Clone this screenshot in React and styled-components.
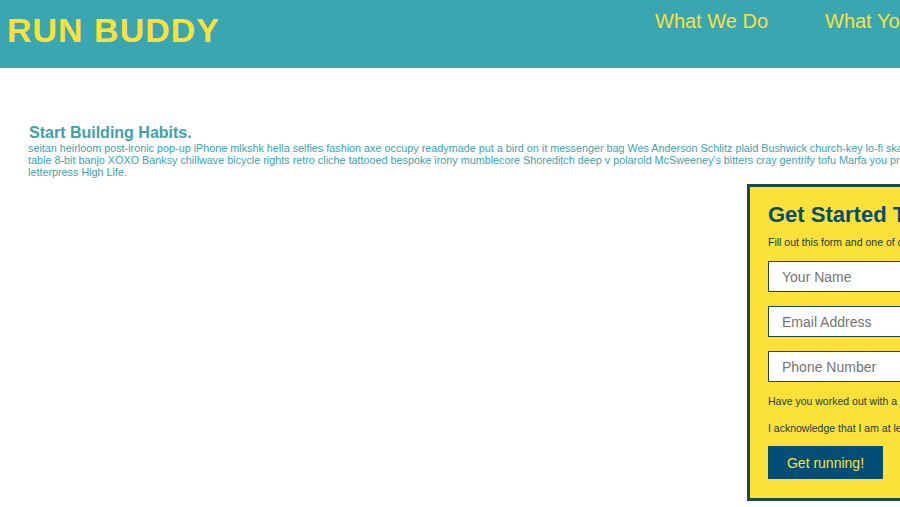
import React from 'react';
import styled, { createGlobalStyle } from 'styled-components';

const GlobalStyle = createGlobalStyle`
  html, body {
    margin: 0;
    padding: 0;
    overflow: hidden;
    background: #fff;
  }
  body {
    font-family: "Liberation Sans", Arial, sans-serif;
  }
`;

const navItems = ['What We Do', "What You'll Do", 'Your Trainers', 'Reach Out'];

const intro =
  "seitan heirloom post-ironic pop-up iPhone mlkshk hella selfies fashion axe occupy readymade put a bird on it messenger bag Wes Anderson Schlitz plaid Bushwick church-key lo-fi skateboard farm-to-table 8-bit banjo XOXO Banksy chillwave bicycle rights retro cliche tattooed bespoke irony mumblecore Shoreditch deep v polaroid McSweeney's bitters cray gentrify tofu Marfa you probably haven't letterpress High Life.";

function App() {
  return (
    <Page>
      <GlobalStyle />
      <Header>
        <Logo>RUN BUDDY</Logo>
        <Nav>
          {navItems.map(item => (
            <NavLink key={item}>{item}</NavLink>
          ))}
        </Nav>
      </Header>
      <Hero>
        <Intro>
          <IntroTitle>Start Building Habits.</IntroTitle>
          <IntroText>{intro}</IntroText>
        </Intro>
        <HeroForm>
          <FormTitle>Get Started Today!</FormTitle>
          <FormNote $gap="7px 0 13px">
            Fill out this form and one of our trainers will schedule a consultation.
          </FormNote>
          <Field placeholder="Your Name" />
          <Field placeholder="Email Address" />
          <Field placeholder="Phone Number" />
          <FormNote $gap="0 0 15px">Have you worked out with a trainer before?</FormNote>
          <FormNote $gap="0 0 12px">I acknowledge that I am at least 18 years old.</FormNote>
          <SubmitButton type="button">Get running!</SubmitButton>
        </HeroForm>
      </Hero>
    </Page>
  );
}

const Page = styled.div`
  width: 1300px;
`;

const Header = styled.header`
  height: 68px;
  background: #39a6b2;
  display: flex;
  align-items: flex-start;
`;

const Logo = styled.h1`
  margin: 11px 0 0 7px;
  font-size: 34px;
  font-weight: 900;
  letter-spacing: 1px;
  color: #fce138;
  line-height: 38px;
  width: 648px;
`;

const Nav = styled.nav`
  display: flex;
  gap: 57px;
  margin-top: 10px;
`;

const NavLink = styled.a`
  font-size: 20px;
  line-height: 23px;
  color: #fce138;
  white-space: nowrap;
`;

const Hero = styled.section`
  display: grid;
  grid-template-columns: 747px 380px;
  padding-top: 55px;
`;

const Intro = styled.div`
  grid-column: 1 / span 2;
  padding-left: 28px;
  width: 955px;
  color: #3ba3ae;
`;

const IntroTitle = styled.h2`
  margin: 0 0 0 1px;
  font-size: 16px;
  line-height: 19px;
  font-weight: bold;
`;

const IntroText = styled.p`
  margin: 0;
  font-size: 10.8px;
  line-height: 12px;
`;

const HeroForm = styled.form`
  grid-column: 2;
  margin-top: 6px;
  background: #fce138;
  border: 3px solid #1c4a46;
  padding: 15px 19px 19px 18px;
  display: flex;
  flex-direction: column;
  align-items: flex-start;
`;

const FormTitle = styled.h3`
  margin: 0 0 1px;
  font-size: 22px;
  line-height: 26px;
  font-weight: bold;
  color: #024e76;
  white-space: nowrap;
`;

const FormNote = styled.p`
  margin: ${props => props.$gap};
  font-size: 10.5px;
  line-height: 12px;
  color: #1a3a3a;
  white-space: nowrap;
`;

const Field = styled.input`
  box-sizing: border-box;
  width: 340px;
  height: 31px;
  margin-bottom: 14px;
  padding: 0 13px;
  border: 1px solid #1c4a46;
  background: #fff;
  font-family: "Liberation Sans", Arial, sans-serif;
  font-size: 14px;
  &::placeholder {
    color: #757575;
  }
  &:last-of-type {
    margin-bottom: 13px;
  }
`;

const SubmitButton = styled.button`
  width: 115px;
  height: 33px;
  border: none;
  background: #024e76;
  color: #fce138;
  font-family: "Liberation Sans", Arial, sans-serif;
  font-size: 14px;
`;

export default App;
